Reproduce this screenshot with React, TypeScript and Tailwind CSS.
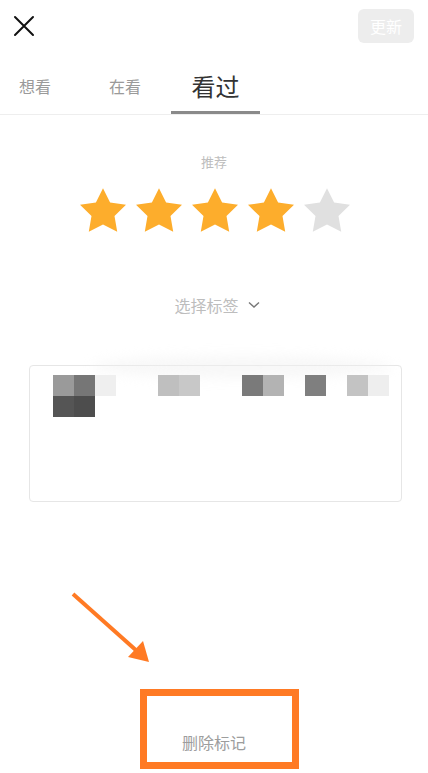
import type { ReactNode } from 'react'

const font = { fontFamily: '"Noto Sans CJK SC", "Noto Sans", sans-serif' }

// 打码区域：21px 格子，按列填色
const mosaicRow1: Record<number, string> = {
  0: '#9a9a9a',
  1: '#767676',
  2: '#efefef',
  5: '#bfbfbf',
  6: '#c8c8c8',
  9: '#7a7a7a',
  10: '#b3b3b3',
  12: '#7f7f7f',
  14: '#c3c3c3',
  15: '#eeeeee',
}
const mosaicRow2: Record<number, string> = {
  0: '#555555',
  1: '#4d4d4d',
}

function Star({ on }: { on: boolean }) {
  return (
    <svg width="46" height="44" viewBox="2 2 20 19.02">
      <path
        d="M12 2l3.09 6.26L22 9.27l-5 4.87 1.18 6.88L12 17.77l-6.18 3.25L7 14.14 2 9.27l6.91-1.01L12 2z"
        fill={on ? '#fdad2c' : '#e0e0e0'}
      />
    </svg>
  )
}

function Tab({ children, active }: { children: ReactNode; active?: boolean }) {
  if (active) {
    return (
      <div className="flex h-full w-[89px] items-center justify-center border-b-[3px] border-[#8a8a8a] pt-[3px] text-[24px] text-[#333]">
        {children}
      </div>
    )
  }
  return (
    <div className="flex h-full items-center text-[16px] text-[#9a9a9a]">
      {children}
    </div>
  )
}

export default function App() {
  const cols = Array.from({ length: 16 }, (_, i) => i)

  return (
    <div
      className="relative flex h-[773px] w-[428px] flex-col overflow-hidden bg-white"
      style={font}
    >
      <header className="flex h-[52px] items-center justify-between pl-[13px] pr-[14px]">
        <svg width="22" height="22" viewBox="0 0 22 22">
          <path d="M2 2L20 20M20 2L2 20" stroke="#111" strokeWidth="2" strokeLinecap="round" />
        </svg>
        <button
          type="button"
          className="flex h-[34px] w-[56px] items-center justify-center rounded-[6px] bg-[#ededed] text-[16px] text-white"
        >
          更新
        </button>
      </header>

      <nav className="flex h-[63px] items-stretch border-b border-[#eeeeee] pl-[19px] pt-[5px]">
        <Tab>想看</Tab>
        <div className="ml-[58px] h-full">
          <Tab>在看</Tab>
        </div>
        <div className="ml-[30px] h-full">
          <Tab active>看过</Tab>
        </div>
      </nav>

      <p className="mt-[38px] text-center text-[13px] leading-[18px] text-[#bdbdbd]">推荐</p>

      <div className="mt-[17px] flex justify-center gap-[10px] pl-[2px]">
        {[0, 1, 2, 3, 4].map((i) => (
          <Star key={i} on={i < 4} />
        ))}
      </div>

      <div className="mt-[62px] flex items-center justify-center gap-[9px] pl-[6px] text-[16px] leading-[22px] text-[#bdbdbd]">
        <span>选择标签</span>
        <svg width="12" height="8" viewBox="0 0 12 8">
          <path d="M1 1.5L6 6l5-4.5" fill="none" stroke="#777" strokeWidth="1.4" />
        </svg>
      </div>

      <div className="relative mx-[29px] mt-[49px] h-[137px] w-[373px] rounded-[4px] border border-[#e6e6e6] pl-[23px] pt-[9px]">
        <div className="pointer-events-none absolute -top-[10px] left-[62px] h-[22px] w-[300px] rounded-[50%] bg-[#f0f0f0] opacity-50 blur-[6px]" />
        <div className="relative flex">
          {cols.map((c) => (
            <div
              key={c}
              className="h-[21px] w-[21px]"
              style={{ backgroundColor: mosaicRow1[c] ?? 'transparent' }}
            />
          ))}
        </div>
        <div className="relative flex">
          {cols.slice(0, 2).map((c) => (
            <div key={c} className="h-[21px] w-[21px]" style={{ backgroundColor: mosaicRow2[c] }} />
          ))}
        </div>
      </div>

      <div className="mt-auto pb-[20px] text-center text-[16px] leading-[22px] text-[#9d9d9d]">
        删除标记
      </div>

      {/* 标注：箭头 + 框 */}
      <svg className="pointer-events-none absolute left-0 top-0" width="428" height="773">
        <line x1="73" y1="594" x2="138" y2="652" stroke="#ff7a24" strokeWidth="4" />
        <polygon points="149,662 128,657 143,641" fill="#ff7a24" />
      </svg>
      <div className="pointer-events-none absolute left-[140px] top-[689px] h-[80px] w-[159px] border-[7px] border-[#ff7a24]" />
    </div>
  )
}
